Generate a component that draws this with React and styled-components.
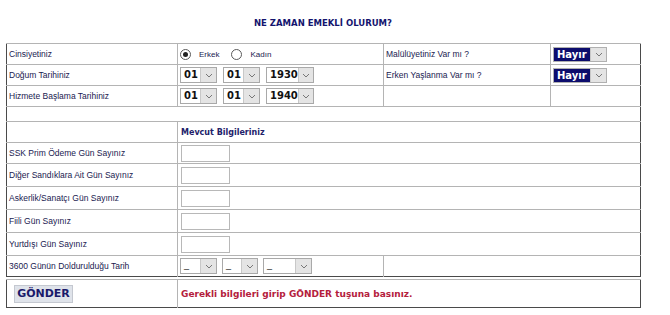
import React from 'react'
import styled, { createGlobalStyle } from 'styled-components'

const GlobalStyle = createGlobalStyle`
  body {
    margin: 0;
    background: #fff;
    font-family: "Liberation Sans", Arial, sans-serif;
  }
`

const Page = styled.div`
  padding: 18px 0 0 6px;
  width: 634px;
`

const Title = styled.div`
  text-align: center;
  font-family: "DejaVu Sans", Verdana, sans-serif;
  font-weight: bold;
  font-size: 8.5px;
  line-height: 10px;
  color: #14146e;
  margin-bottom: 15px;
`

const Table = styled.table`
  width: 634px;
  border-collapse: collapse;
  table-layout: fixed;
  border-top: 1px solid #9a9a9a;
  border-left: 1px solid #4a4a4a;
  border-right: 1px solid #4a4a4a;
  border-bottom: 1px solid #4a4a4a;
  margin-top: ${(p) => p.$gap || 0}px;
`

const Cell = styled.td`
  border: 1px solid #b4b4b4;
  padding: 0 0 0 ${(p) => p.$pad ?? 2}px;
  height: ${(p) => p.$h || 20}px;
  font-size: 8.5px;
  color: #1a1a50;
  vertical-align: middle;
  white-space: nowrap;
  &:first-child { border-left: none; }
  &:last-child { border-right: none; }
`

const Row = styled.tr`
  &:last-child td { border-bottom: none; }
`

const Inline = styled.div`
  display: flex;
  align-items: center;
  gap: ${(p) => p.$gap || 6}px;
`

const RadioDot = styled.span`
  width: 9px;
  height: 9px;
  border-radius: 50%;
  border: 1px solid #5a5a5a;
  background: #fff;
  display: inline-flex;
  align-items: center;
  justify-content: center;
  &::after {
    content: '';
    width: 5px;
    height: 5px;
    border-radius: 50%;
    background: ${(p) => (p.$on ? '#222' : 'transparent')};
  }
`

const RadioLabel = styled.span`
  font-size: 8px;
  color: #1a1a50;
  margin: 0 6px 0 2px;
`

const SelectBox = styled.div`
  display: flex;
  align-items: stretch;
  width: ${(p) => p.$w}px;
  height: 16px;
  border: 1px solid #a9a9a9;
  background: #fff;
  box-sizing: border-box;
`

const SelectValue = styled.span`
  flex: 1;
  padding: 0 0 ${(p) => (p.$blank ? 5 : 0)}px 3px;
  display: flex;
  align-items: center;
  font-family: "DejaVu Sans", Verdana, sans-serif;
  font-weight: ${(p) => (p.$blank ? 'normal' : 'bold')};
  font-size: 10px;
  line-height: 10px;
  color: ${(p) => (p.$blank ? '#444' : '#111')};
`

const Arrow = styled.span`
  width: 15px;
  background: #e4e4e4;
  border-left: 1px solid #c8c8c8;
  display: flex;
  align-items: center;
  justify-content: center;
`

const NavySelect = styled.div`
  display: flex;
  align-items: stretch;
  width: 54px;
  height: 15px;
  border: 1px solid #b0b0b0;
  box-sizing: border-box;
`

const NavyValue = styled.span`
  flex: 1;
  background: #0c0c6c;
  color: #fff;
  font-family: "DejaVu Sans", Verdana, sans-serif;
  font-weight: bold;
  font-size: 10px;
  display: flex;
  align-items: center;
  padding-left: 3px;
`

const TextBox = styled.div`
  width: 49px;
  height: 17px;
  border: 1px solid #b8b8b8;
  box-sizing: border-box;
  background: #fff;
  margin-left: 1px;
`

const Heading = styled.span`
  font-family: "DejaVu Sans", Verdana, sans-serif;
  font-weight: bold;
  font-size: 8px;
  color: #22226a;
  padding-left: 1px;
`

const SendButton = styled.button`
  font-family: "DejaVu Sans", Verdana, sans-serif;
  font-weight: bold;
  font-size: 11px;
  color: #1a1a6a;
  background: #dfe3ea;
  border: 1px solid #c4c8d0;
  width: 59px;
  height: 18px;
  padding: 0;
  margin-left: 5px;
`

const Notice = styled.span`
  font-family: "DejaVu Sans", Verdana, sans-serif;
  font-weight: bold;
  font-size: 9px;
  color: #b4203c;
`

const Chevron = () => (
  <svg width="8" height="5" viewBox="0 0 8 5">
    <path d="M1 1 L4 4 L7 1" fill="none" stroke="#777" strokeWidth="1" />
  </svg>
)

const Select = ({ value, w }) => (
  <SelectBox $w={w}>
    <SelectValue $blank={value === '_'}>{value}</SelectValue>
    <Arrow><Chevron /></Arrow>
  </SelectBox>
)

const Hayir = () => (
  <NavySelect>
    <NavyValue>Hayır</NavyValue>
    <Arrow><Chevron /></Arrow>
  </NavySelect>
)

const DateSelects = ({ d, m, y }) => (
  <Inline $gap={6}>
    <Select value={d} w={37} />
    <Select value={m} w={37} />
    <Select value={y} w={48} />
  </Inline>
)

const inputRows = [
  ['SSK Prim Ödeme Gün Sayınız', 20],
  ['Diğer Sandıklara Ait Gün Sayınız', 22],
  ['Askerlik/Sanatçı Gün Sayınız', 22],
  ['Fiili Gün Sayınız', 22],
  ['Yurtdışı Gün Sayınız', 22],
]

export default function App() {
  return (
    <>
      <GlobalStyle />
      <Page>
        <Title>NE ZAMAN EMEKLİ OLURUM?</Title>
        <Table>
          <colgroup>
            <col style={{ width: 171 }} />
            <col style={{ width: 206 }} />
            <col style={{ width: 167 }} />
            <col style={{ width: 90 }} />
          </colgroup>
          <tbody>
            <Row>
              <Cell $h={19}>Cinsiyetiniz</Cell>
              <Cell>
                <Inline $gap={0}>
                  <RadioDot $on />
                  <RadioLabel>Erkek</RadioLabel>
                  <RadioDot />
                  <RadioLabel>Kadın</RadioLabel>
                </Inline>
              </Cell>
              <Cell>Malülüyetiniz Var mı ?</Cell>
              <Cell><Hayir /></Cell>
            </Row>
            <Row>
              <Cell $h={20}>Doğum Tarihiniz</Cell>
              <Cell><DateSelects d="01" m="01" y="1930" /></Cell>
              <Cell>Erken Yaşlanma Var mı ?</Cell>
              <Cell><Hayir /></Cell>
            </Row>
            <Row>
              <Cell $h={20}>Hizmete Başlama Tarihiniz</Cell>
              <Cell><DateSelects d="01" m="01" y="1940" /></Cell>
              <Cell />
              <Cell />
            </Row>
            <Row>
              <Cell colSpan={4} $h={14} />
            </Row>
            <Row>
              <Cell $h={14} />
              <Cell colSpan={3}><Heading>Mevcut Bilgileriniz</Heading></Cell>
            </Row>
            {inputRows.map(([label, h]) => (
              <Row key={label}>
                <Cell $h={h}>{label}</Cell>
                <Cell colSpan={3}><TextBox /></Cell>
              </Row>
            ))}
            <Row>
              <Cell $h={20}>3600 Günün Doldurulduğu Tarih</Cell>
              <Cell>
                <Inline $gap={5}>
                  <Select value="_" w={37} />
                  <Select value="_" w={36} />
                  <Select value="_" w={49} />
                </Inline>
              </Cell>
              <Cell colSpan={2} />
            </Row>
          </tbody>
        </Table>
        <Table $gap={2}>
          <colgroup>
            <col style={{ width: 171 }} />
            <col style={{ width: 463 }} />
          </colgroup>
          <tbody>
            <Row>
              <Cell $h={27}><SendButton>GÖNDER</SendButton></Cell>
              <Cell $pad={3}><Notice>Gerekli bilgileri girip GÖNDER tuşuna basınız.</Notice></Cell>
            </Row>
          </tbody>
        </Table>
      </Page>
    </>
  )
}
